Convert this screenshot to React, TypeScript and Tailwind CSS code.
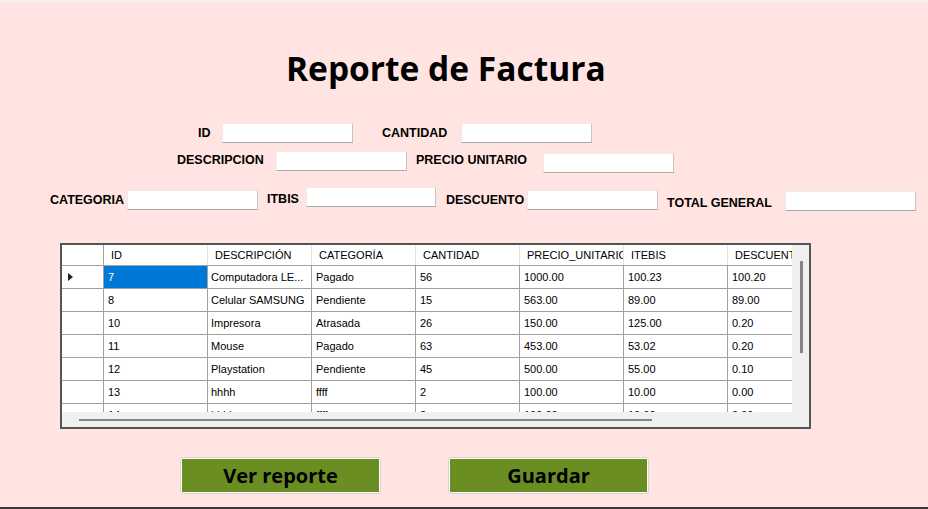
import React from "react";

const lbl =
  "shrink-0 whitespace-nowrap text-[12.5px] leading-[14px] font-bold text-black font-['Liberation_Sans',Arial,sans-serif]";

function Box({ extra }: { extra: string }) {
  return (
    <div
      className={
        "shrink-0 h-[20px] bg-white border border-t-[#ececec] border-l-[#ececec] border-r-[#c4c4c4] border-b-[#a9a9a9] " +
        extra
      }
    />
  );
}

const headers = ["ID", "DESCRIPCIÓN", "CATEGORÍA", "CANTIDAD", "PRECIO_UNITARIO", "ITEBIS", "DESCUENTO"];
const rows = [
  ["7", "Computadora LE...", "Pagado", "56", "1000.00", "100.23", "100.20"],
  ["8", "Celular SAMSUNG", "Pendiente", "15", "563.00", "89.00", "89.00"],
  ["10", "Impresora", "Atrasada", "26", "150.00", "125.00", "0.20"],
  ["11", "Mouse", "Pagado", "63", "453.00", "53.02", "0.20"],
  ["12", "Playstation", "Pendiente", "45", "500.00", "55.00", "0.10"],
  ["13", "hhhh", "ffff", "2", "100.00", "10.00", "0.00"],
  ["14", "hhhh", "ffff", "2", "100.00", "10.00", "0.00"],
];

export default function App() {
  return (
    <div className="w-[928px] h-[509px] bg-[#ffe4e1] flex flex-col overflow-hidden">
      <div className="h-[2px] bg-[#f0f0f0] shrink-0" />
      <div className="mt-[49px] h-[34px] pl-[286px] text-[33.5px] leading-[34px] font-bold text-black whitespace-nowrap font-['Open_Sans',sans-serif]">
        Reporte de Factura
      </div>

      {/* Row 1 */}
      <div className="mt-[38px] h-[20px] flex items-start pl-[198px]">
        <span className={lbl + " w-[24px] mt-[3px]"}>ID</span>
        <Box extra="w-[131px]" />
        <div className="w-[29px] shrink-0" />
        <span className={lbl + " w-[79px] mt-[3px]"}>CANTIDAD</span>
        <Box extra="w-[131px]" />
      </div>

      {/* Row 2 */}
      <div className="mt-[7px] h-[23px] flex items-start pl-[177px]">
        <span className={lbl + " w-[99px] mt-[3px]"}>DESCRIPCION</span>
        <Box extra="w-[131px] mt-[1px]" />
        <div className="w-[9px] shrink-0" />
        <span className={lbl + " w-[127px] mt-[3px]"}>PRECIO UNITARIO</span>
        <Box extra="w-[131px] mt-[3px]" />
      </div>

      {/* Row 3 */}
      <div className="mt-[13px] h-[25px] flex items-start pl-[50px]">
        <span className={lbl + " w-[77px] mt-[7px]"}>CATEGORIA</span>
        <Box extra="w-[131px] mt-[4px]" />
        <div className="w-[9px] shrink-0" />
        <span className={lbl + " w-[39px] mt-[6px]"}>ITBIS</span>
        <Box extra="w-[130px] mt-[1px]" />
        <div className="w-[10px] shrink-0" />
        <span className={lbl + " w-[81px] mt-[7px]"}>DESCUENTO</span>
        <Box extra="w-[131px] mt-[4px]" />
        <div className="w-[9px] shrink-0" />
        <span className={lbl + " w-[118px] mt-[10px]"}>TOTAL GENERAL</span>
        <Box extra="w-[131px] mt-[5px]" />
      </div>

      {/* Grid */}
      <div className="mt-[32px] ml-[60px] w-[751px] h-[186px] shrink-0 border-2 border-[#555555] flex bg-[#f0f0f0] font-['Liberation_Sans',Arial,sans-serif] text-[11px] text-black">
        <div className="w-[730px] flex flex-col">
          <div className="h-[167px] overflow-hidden bg-white">
            <div className="w-max">
              <div className="flex h-[21px] border-b border-[#a0a0a0]">
                <div className="w-[42px] shrink-0 border-r border-[#a0a0a0]" />
                {headers.map((h) => (
                  <div
                    key={h}
                    className="w-[104px] shrink-0 border-r border-[#e2e2e2] pl-[7px] flex items-center overflow-hidden whitespace-nowrap"
                  >
                    {h}
                  </div>
                ))}
              </div>
              {rows.map((r, i) => (
                <div key={i} className="flex h-[23px] border-b border-[#a0a0a0]">
                  <div className="w-[42px] shrink-0 border-r border-[#a0a0a0] flex items-center pl-[6px]">
                    {i === 0 ? (
                      <div className="w-0 h-0 border-l-[5px] border-l-[#222] border-y-[4px] border-y-transparent" />
                    ) : null}
                  </div>
                  {r.map((c, j) => (
                    <div
                      key={j}
                      className={
                        "w-[104px] shrink-0 border-r border-[#a0a0a0] flex items-center overflow-hidden whitespace-nowrap " +
                        (j === 1 ? "pl-[3px] " : "pl-[4px] ") +
                        (i === 0 && j === 0 ? "bg-[#0078d7] text-white" : "")
                      }
                    >
                      {c}
                    </div>
                  ))}
                </div>
              ))}
            </div>
          </div>
          <div className="h-[15px] pt-[7px] pl-[17px]">
            <div className="w-[573px] h-[2px] bg-[#858585]" />
          </div>
        </div>
        <div className="w-[17px] pt-[16px] pl-[8px]">
          <div className="w-[3px] h-[92px] bg-[#858585]" />
        </div>
      </div>

      {/* Buttons */}
      <div className="mt-[28px] flex pl-[180px] gap-[67px]">
        <div className="w-[201px] h-[37px] rounded-[3px] border border-[#d4d4d4] bg-white p-[1px]">
          <div className="w-full h-full bg-[#6b8e23] flex items-center justify-center text-[20px] font-bold text-black font-['Open_Sans',sans-serif]">
            Ver reporte
          </div>
        </div>
        <div className="w-[201px] h-[37px] rounded-[3px] border border-[#d4d4d4] bg-white p-[1px]">
          <div className="w-full h-full bg-[#6b8e23] flex items-center justify-center text-[20px] font-bold text-black font-['Open_Sans',sans-serif]">
            Guardar
          </div>
        </div>
      </div>
      <div className="flex-1" />
      <div className="h-[2px] bg-[#3a3a3a] shrink-0" />
    </div>
  );
}
